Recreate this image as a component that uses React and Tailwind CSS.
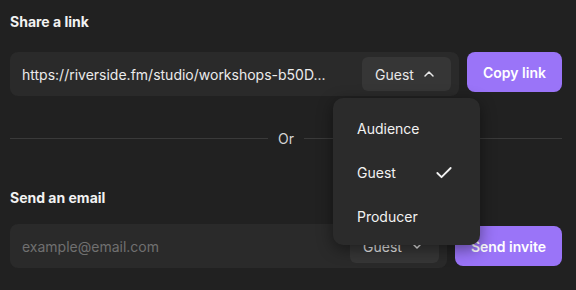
import { ChevronUp, ChevronDown, Check } from "lucide-react";

const font = { fontFamily: "Inter, 'Liberation Sans', sans-serif" };

function RoleSelect({ open }) {
  return (
    <div className="relative">
      <button className="flex items-center h-[34px] w-[89px] pl-[13px] pr-[14px] justify-between rounded-md bg-[#363636] text-[14px] text-[#e8e8e8]">
        <span>Guest</span>
        {open ? (
          <ChevronUp className="w-4 h-4" strokeWidth={2.2} />
        ) : (
          <ChevronDown className="w-4 h-4" strokeWidth={2.2} />
        )}
      </button>
      {open && (
        <div className="absolute z-10 top-[41px] -left-[29px] w-[147px] h-[147px] rounded-[10px] bg-[#2b2b2b] shadow-[0_4px_16px_rgba(0,0,0,0.45)] flex flex-col justify-center pt-[2px]">
          {["Audience", "Guest", "Producer"].map((r) => (
            <div
              key={r}
              className="flex items-center justify-between h-[44px] pl-[24px] pr-[26px] text-[14px] text-[#f2f2f2]"
            >
              <span>{r}</span>
              {r === "Guest" && <Check className="w-5 h-5" strokeWidth={2.2} />}
            </div>
          ))}
        </div>
      )}
    </div>
  );
}

export default function App() {
  return (
    <main
      style={font}
      className="w-[576px] h-[290px] bg-[#212121] text-white pl-[10px] pr-[14px] pt-[12px] overflow-hidden"
    >
      <h2 className="text-[14px] leading-5 font-bold text-[#f2f2f2]">
        Share a link
      </h2>

      <div className="flex items-start gap-2 mt-5">
        <div className="flex items-center justify-between h-[44px] w-[449px] rounded-lg bg-[#2a2a2a] pl-3 pr-2">
          <span className="text-[14px] text-[#ececec] truncate">
            https://riverside.fm/studio/workshops-b50D...
          </span>
          <RoleSelect open />
        </div>
        <button className="h-10 w-[95px] rounded-lg bg-[#9a74f8] text-[14px] font-semibold text-white">
          Copy link
        </button>
      </div>

      <div className="flex items-center gap-[10px] mt-8 h-5">
        <div className="flex-1 h-px bg-[#3a3a3a]" />
        <span className="text-[14px] text-[#d4d4d4]">Or</span>
        <div className="flex-1 h-px bg-[#3a3a3a]" />
      </div>

      <h2 className="text-[14px] leading-5 font-bold text-[#f2f2f2] mt-10">
        Send an email
      </h2>

      <div className="flex items-center gap-2 mt-4">
        <div className="flex items-center justify-between h-[44px] w-[437px] rounded-lg bg-[#2a2a2a] pl-3 pr-2">
          <span className="text-[14px] text-[#707070]">example@email.com</span>
          <RoleSelect />
        </div>
        <button className="h-10 w-[107px] rounded-lg bg-[#9a74f8] text-[14px] font-semibold text-white">
          Send invite
        </button>
      </div>
    </main>
  );
}
